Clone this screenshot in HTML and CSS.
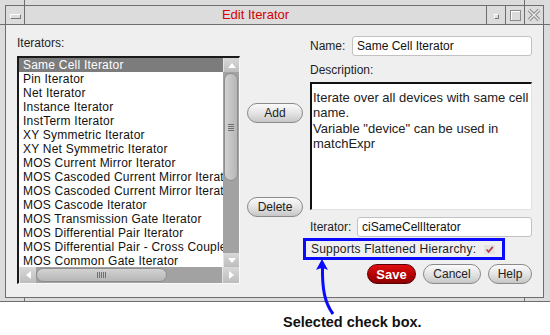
FILE: index.html
```html
<!DOCTYPE html>
<html lang="en">
<head>
  <meta charset="UTF-8" />
  <title>Edit Iterator</title>
  <link rel="stylesheet" href="styles.css">
</head>
<body>
<div class="screen">

  <!-- Window manager frame -->
  <div class="frame">
    <span class="grip grip-top-left"></span>
    <span class="grip grip-top-right"></span>
    <span class="grip grip-side-left"></span>
    <span class="grip grip-side-right"></span>
    <span class="grip grip-bottom-left"></span>
    <span class="grip grip-bottom-right"></span>

    <div class="window">
      <div class="titlebar">
        <div class="tb-menu"><span class="tb-menu-bar"></span></div>
        <div class="tb-title">Edit Iterator</div>
        <div class="tb-btn"><span class="tb-min"></span></div>
        <div class="tb-btn"><span class="tb-max"></span></div>
        <div class="tb-btn">
          <svg width="14" height="14" viewBox="0 0 14 14">
            <path d="M2 2 L12 12 M12 2 L2 12" stroke="#8c8c8c" stroke-width="3.4" fill="none" />
            <path d="M2 2 L12 12 M12 2 L2 12" stroke="#ececec" stroke-width="1.4" fill="none" />
          </svg>
        </div>
      </div>

      <!-- Dialog body -->
      <div class="dialog">
        <div class="col-list">
          <div class="label">Iterators:</div>
          <div class="listbox">
            <div class="list-main">
              <ul class="items">
                <li class="selected">Same Cell Iterator</li>
                <li>Pin Iterator</li>
                <li>Net Iterator</li>
                <li>Instance Iterator</li>
                <li>InstTerm Iterator</li>
                <li>XY Symmetric Iterator</li>
                <li>XY Net Symmetric Iterator</li>
                <li>MOS Current Mirror Iterator</li>
                <li>MOS Cascoded Current Mirror Iterator</li>
                <li>MOS Cascoded Current Mirror Iterator</li>
                <li>MOS Cascode Iterator</li>
                <li>MOS Transmission Gate Iterator</li>
                <li>MOS Differential Pair Iterator</li>
                <li>MOS Differential Pair - Cross Coupled Iterator</li>
                <li>MOS Common Gate Iterator</li>
              </ul>
              <div class="vscroll">
                <div class="sb-btn"><span class="arrow-up"></span></div>
                <div class="thumb-v"><span class="grip-lines-h"></span></div>
                <div class="sb-track"></div>
                <div class="sb-btn"><span class="arrow-down"></span></div>
              </div>
            </div>
            <div class="hscroll">
              <div class="sb-btn sb-btn-h"><span class="arrow-left"></span></div>
              <div class="thumb-h"><span class="grip-lines-v"></span></div>
              <div class="sb-track"></div>
              <div class="sb-btn sb-btn-h"><span class="arrow-right"></span></div>
            </div>
          </div>
        </div>

        <div class="col-actions">
          <button class="pill btn-add">Add</button>
          <button class="pill btn-delete">Delete</button>
        </div>

        <div class="col-form">
          <div class="field-row">
            <span class="field-label name-label">Name:</span>
            <div class="text-input">Same Cell Iterator</div>
          </div>
          <div class="label desc-label">Description:</div>
          <div class="textbox">Iterate over all devices with same cell name.<br>Variable "device" can be used in matchExpr</div>
          <div class="field-row iter-row">
            <span class="field-label iter-label">Iterator:</span>
            <div class="text-input">ciSameCellIterator</div>
          </div>
          <div class="flag-row">
            <span class="flag-label">Supports Flattened Hierarchy:</span>
            <span class="checkbox">
              <svg width="11" height="9" viewBox="0 0 11 9">
                <path d="M2.5 4.5 L4.6 6.8 L8.8 1.8" stroke="#b4434a" stroke-width="1.8" fill="none" />
              </svg>
            </span>
          </div>
          <div class="form-actions">
            <button class="pill btn-save">Save</button>
            <button class="pill btn-cancel">Cancel</button>
            <button class="pill btn-help">Help</button>
          </div>
        </div>
      </div>
    </div>
  </div>

  <div class="caption">Selected check box.</div>

  <!-- Callout arrow -->
  <svg class="callout" width="550" height="335" viewBox="0 0 550 335">
    <path d="M322.5 266 C322 290, 325 303, 333 314" stroke="#0a0aff" stroke-width="3" fill="none" />
    <path d="M322 259 L316 270 Q322 266.5 328 270 Z" fill="#0a0aff" />
  </svg>
</div>
</body>
</html>
```

FILE: styles.css
```css
/* Global */
body {
  margin: 0;
  background-color: #ffffff;
  font-family: 'Liberation Sans', Arial, sans-serif;
  font-size: 12px;
  color: #1e1e1e;
}

.screen {
  position: relative;
  width: 550px;
  height: 335px;
  overflow: hidden;
}

/* Frame */
.frame {
  position: relative;
  box-sizing: border-box;
  height: 302px;
  padding: 5px 0 0 5px;
  background-color: #dcdcdc;
  border-bottom: 1px solid #6e6e6e;
}

.grip {
  position: absolute;
  background-color: #6e6e6e;
}

.grip-top-left { left: 24px; top: 0; width: 1px; height: 5px; }
.grip-top-right { left: 524px; top: 0; width: 1px; height: 5px; }
.grip-side-left { left: 0; top: 24px; width: 5px; height: 1px; }
.grip-side-right { left: 543px; top: 24px; width: 7px; height: 1px; }
.grip-bottom-left { left: 24px; top: 297px; width: 1px; height: 4px; }
.grip-bottom-right { left: 524px; top: 297px; width: 1px; height: 4px; }

.window {
  box-sizing: border-box;
  width: 539px;
  height: 293px;
  border: 1px solid #6e6e6e;
  background-color: #efefef;
  display: flex;
  flex-direction: column;
}

/* Title bar */
.titlebar {
  box-sizing: border-box;
  height: 19px;
  display: flex;
  background-color: #dcdcdc;
  border-bottom: 1px solid #6e6e6e;
}

.tb-menu {
  box-sizing: border-box;
  width: 19px;
  border-right: 1px solid #6e6e6e;
  display: flex;
  align-items: center;
  justify-content: center;
}

.tb-menu-bar {
  box-sizing: border-box;
  width: 11px;
  height: 5px;
  margin-top: 2px;
  border: 1px solid;
  border-color: #ffffff #7a7a7a #7a7a7a #ffffff;
}

.tb-title {
  flex: 1;
  text-align: center;
  line-height: 18px;
  font-size: 13px;
  color: #d20000;
}

.tb-btn {
  box-sizing: border-box;
  width: 19px;
  border-left: 1px solid #6e6e6e;
  display: flex;
  align-items: center;
  justify-content: center;
}

.tb-min {
  box-sizing: border-box;
  width: 5px;
  height: 5px;
  margin-top: 2px;
  border: 1px solid;
  border-color: #ffffff #7a7a7a #7a7a7a #ffffff;
}

.tb-max {
  box-sizing: border-box;
  width: 11px;
  height: 11px;
  border: 1px solid #8a8a8a;
  box-shadow: inset 1px 1px 0 #ffffff;
}

/* Dialog body */
.dialog {
  flex: 1;
  display: grid;
  grid-template-columns: 223px 56px 222px;
  column-gap: 7px;
  align-items: start;
  padding: 11px 0 0 11px;
}

.label {
  line-height: 14px;
}

/* List box */
.listbox {
  box-sizing: border-box;
  width: 223px;
  margin-top: 6px;
  border-style: solid;
  border-width: 2px 1px 1px 2px;
  border-color: #1a1a1a #fafafa #fafafa #1a1a1a;
  background-color: #ffffff;
}

.list-main {
  display: flex;
  height: 209px;
}

.items {
  flex: 1;
  list-style: none;
  margin: 0;
  padding: 0;
  overflow: hidden;
  color: #111;
}

.items li {
  height: 14px;
  line-height: 14px;
  padding-left: 4px;
  white-space: nowrap;
  letter-spacing: 0.22px;
}

.items li.selected {
  background-color: #7c7c7c;
  color: #ffffff;
}

.vscroll {
  width: 16px;
  display: flex;
  flex-direction: column;
  background-color: #a2a2a2;
}

.sb-btn {
  flex: none;
  height: 14px;
  display: flex;
  align-items: center;
  justify-content: center;
  background: linear-gradient(#d8d8d8, #bdbdbd);
  border-left: 1px solid #e4e4e4;
}

.sb-btn-h {
  width: 16px;
  height: auto;
}

.sb-track {
  flex: 1;
}

.thumb-v {
  box-sizing: border-box;
  height: 108px;
  margin: 1px 1px 0 1px;
  border: 1px solid #8e8e8e;
  border-radius: 8px;
  background: linear-gradient(90deg, #d2d2d2, #b6b6b6);
  display: flex;
  align-items: center;
  justify-content: center;
}

.thumb-h {
  box-sizing: border-box;
  width: 131px;
  margin: 1px 0;
  border: 1px solid #8e8e8e;
  border-radius: 8px;
  background: linear-gradient(#d2d2d2, #b6b6b6);
  display: flex;
  align-items: center;
  justify-content: center;
}

.grip-lines-h {
  width: 6px;
  height: 7px;
  background: repeating-linear-gradient(#6f6f6f 0 1px, transparent 1px 2px);
}

.grip-lines-v {
  width: 9px;
  height: 6px;
  background: repeating-linear-gradient(90deg, #6f6f6f 0 1px, transparent 1px 2px);
}

.hscroll {
  height: 16px;
  display: flex;
  background-color: #a2a2a2;
}

.arrow-up,
.arrow-down {
  width: 0;
  height: 0;
  border-left: 4px solid transparent;
  border-right: 4px solid transparent;
}

.arrow-up { border-bottom: 5px solid #ffffff; }
.arrow-down { border-top: 5px solid #ffffff; }

.arrow-left,
.arrow-right {
  width: 0;
  height: 0;
  border-top: 4px solid transparent;
  border-bottom: 4px solid transparent;
}

.arrow-left { border-right: 5px solid #ffffff; }
.arrow-right { border-left: 5px solid #ffffff; }

/* Buttons */
.pill {
  box-sizing: border-box;
  height: 20px;
  padding: 0;
  border: 1px solid #8a8a8a;
  border-radius: 10px;
  background: linear-gradient(#fafafa, #e2e2e2 55%, #c6c6c6);
  font-family: 'Liberation Sans', Arial, sans-serif;
  font-size: 12px;
  color: #222;
}

.col-actions {
  display: flex;
  flex-direction: column;
}

.btn-add {
  width: 56px;
  margin-top: 67px;
}

.btn-delete {
  width: 56px;
  margin-top: 74px;
}

/* Form column */
.col-form {
  display: flex;
  flex-direction: column;
}

.field-row {
  display: flex;
  align-items: center;
  height: 20px;
}

.field-label {
  flex: none;
}

.name-label { width: 42px; }
.iter-label { width: 47px; }

.text-input {
  box-sizing: border-box;
  flex: 1;
  height: 20px;
  line-height: 18px;
  padding-left: 4px;
  border: 1px solid #c2c2c2;
  border-radius: 3px;
  background-color: #ffffff;
  color: #111;
}

.desc-label {
  margin-top: 7px;
}

.textbox {
  box-sizing: border-box;
  height: 128px;
  margin-top: 5px;
  padding: 6px 2px 0 1px;
  border-style: solid;
  border-width: 2px 1px 1px 2px;
  border-color: #111 #e2e2e2 #e2e2e2 #111;
  background-color: #ffffff;
  font-size: 13px;
  line-height: 15.3px;
  color: #222;
}

.iter-row {
  margin-top: 7px;
}

.flag-row {
  box-sizing: border-box;
  width: 202px;
  height: 22px;
  margin: 1px 0 0 -7px;
  padding-left: 5px;
  border: 3px solid #0a0aff;
  display: flex;
  align-items: center;
}

.flag-label {
  letter-spacing: 0.2px;
}

.checkbox {
  width: 11px;
  height: 9px;
  margin-left: 8px;
  background-color: #e4e4e4;
  display: flex;
}

.form-actions {
  display: flex;
  justify-content: flex-end;
  gap: 7px;
  margin-top: 4px;
}

.btn-save {
  width: 49px;
  border-color: #5c0000;
  background: linear-gradient(#e01010, #b40000 55%, #8c0000);
  color: #ffffff;
  font-weight: bold;
  font-size: 13px;
}

.btn-cancel { width: 58px; }
.btn-help { width: 44px; }

/* Caption below the window */
.caption {
  margin: 12px 0 0 283px;
  line-height: 16px;
  font-size: 14.5px;
  font-weight: bold;
  color: #111;
}

.callout {
  position: absolute;
  left: 0;
  top: 0;
  pointer-events: none;
}
```
